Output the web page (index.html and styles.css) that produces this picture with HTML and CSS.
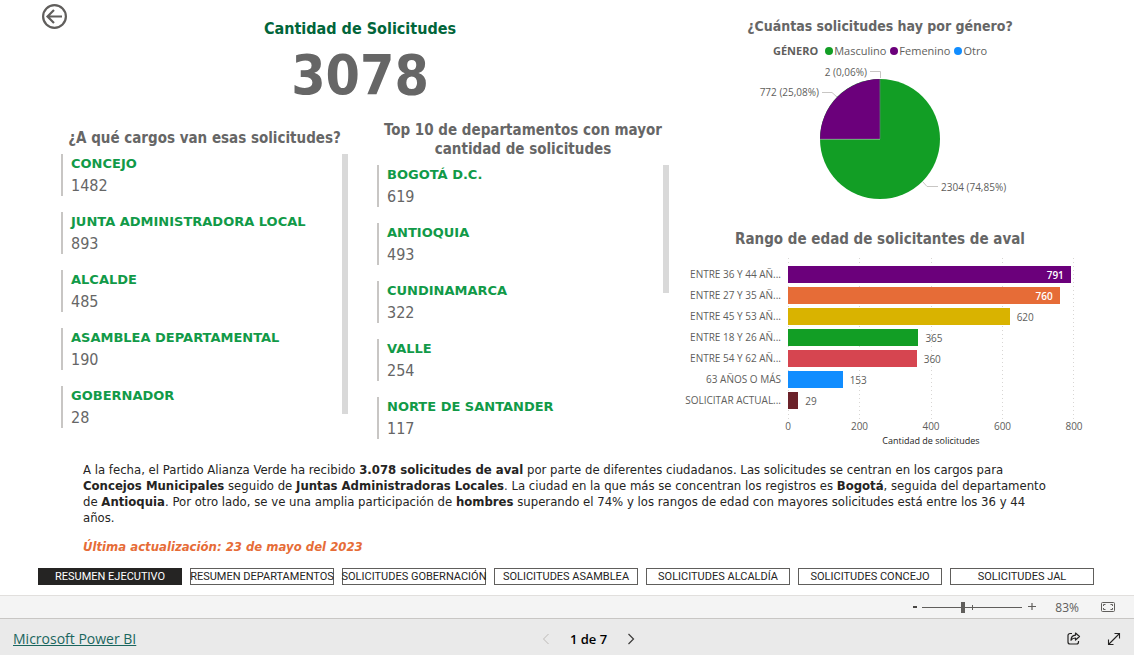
FILE: index.html
```html
<!DOCTYPE html>
<html lang="es">
<head>
<meta charset="utf-8">
<meta name="viewport" content="width=device-width, initial-scale=1">
<title>Microsoft Power BI</title>
<link rel="stylesheet" href="styles.css">
</head>
<body>
<main class="report">
  <div class="dashboard">
    <div class="left-pane">
      <header class="kpi-row">
        <button class="back" type="button" aria-label="Atrás">
          <svg width="26" height="26" viewBox="0 0 26 26" fill="none" stroke="#605e5c" stroke-width="2.200">
            <circle cx="12.500" cy="12.500" r="11.400"/>
            <path d="M20 12.500H6M12 6L5.500 12.500L12 19"/>
          </svg>
        </button>
        <div class="kpi">
          <h1 class="kpi-title">Cantidad de Solicitudes</h1>
          <p class="kpi-value">3078</p>
        </div>
      </header>
      <div class="lists">
        <section class="card card-short">
          <h2 class="title">¿A qué cargos van esas solicitudes?</h2>
          <div class="scroller">
            <ul class="items">
              <li class="item"><strong class="name">CONCEJO</strong><span class="value">1482</span></li>
              <li class="item"><strong class="name">JUNTA ADMINISTRADORA LOCAL</strong><span class="value">893</span></li>
              <li class="item"><strong class="name">ALCALDE</strong><span class="value">485</span></li>
              <li class="item"><strong class="name">ASAMBLEA DEPARTAMENTAL</strong><span class="value">190</span></li>
              <li class="item"><strong class="name">GOBERNADOR</strong><span class="value">28</span></li>
            </ul>
            <span class="thumb thumb-long"></span>
          </div>
        </section>
        <section class="card">
          <h2 class="title">Top 10 de departamentos con mayor cantidad de solicitudes</h2>
          <div class="scroller">
            <ul class="items">
              <li class="item"><strong class="name">BOGOTÁ D.C.</strong><span class="value">619</span></li>
              <li class="item"><strong class="name">ANTIOQUIA</strong><span class="value">493</span></li>
              <li class="item"><strong class="name">CUNDINAMARCA</strong><span class="value">322</span></li>
              <li class="item"><strong class="name">VALLE</strong><span class="value">254</span></li>
              <li class="item"><strong class="name">NORTE DE SANTANDER</strong><span class="value">117</span></li>
            </ul>
            <span class="thumb thumb-short"></span>
          </div>
        </section>
      </div>
    </div>

    <div class="right-pane">
      <section class="gender">
        <h2 class="title title-small">¿Cuántas solicitudes hay por género?</h2>
        <div class="legend">
          <strong class="legend-title">GÉNERO</strong>
          <span class="key"><i class="dot green"></i>Masculino</span>
          <span class="key"><i class="dot purple"></i>Femenino</span>
          <span class="key"><i class="dot blue"></i>Otro</span>
        </div>
        <svg class="pie" width="260" height="140" viewBox="0 0 260 140">
          <circle cx="130" cy="73" r="60" fill="#129e25"/>
          <path d="M130 73L70 73.2A60 60 0 0 1 129.8 13Z" fill="#6b007b"/>
          <path d="M130 73V13" stroke="#6a7f86" stroke-width="1" stroke-opacity=".6"/>
          <path d="M70 73.3H130" stroke="#ffffff" stroke-width="1" stroke-opacity=".4"/>
          <g fill="none" stroke="#c8c6c4">
            <path d="M120 5.500H130.500V12"/>
            <path d="M72 26.500H82L87 31"/>
            <path d="M173 116L177 120.500H188"/>
          </g>
          <text x="117" y="10" text-anchor="end">2 (0,06%)</text>
          <text x="69" y="30" text-anchor="end">772 (25,08%)</text>
          <text x="191" y="125">2304 (74,85%)</text>
        </svg>
      </section>

      <section class="ages">
        <h2 class="title">Rango de edad de solicitantes de aval</h2>
        <div class="chart">
          <ul class="labels">
            <li>ENTRE 36 Y 44 AÑ...</li><li>ENTRE 27 Y 35 AÑ...</li><li>ENTRE 45 Y 53 AÑ...</li><li>ENTRE 18 Y 26 AÑ...</li><li>ENTRE 54 Y 62 AÑ...</li><li>63 AÑOS O MÁS</li><li>SOLICITAR ACTUAL...</li>
          </ul>
          <div class="plot">
            <div class="bar-row"><span class="bar purple inside" style="width:98.9%">791</span></div>
            <div class="bar-row"><span class="bar orange inside" style="width:95%">760</span></div>
            <div class="bar-row"><span class="bar yellow" style="width:77.5%"></span><span>620</span></div>
            <div class="bar-row"><span class="bar green" style="width:45.6%"></span><span>365</span></div>
            <div class="bar-row"><span class="bar red" style="width:45%"></span><span>360</span></div>
            <div class="bar-row"><span class="bar blue" style="width:19.1%"></span><span>153</span></div>
            <div class="bar-row"><span class="bar brown" style="width:3.6%"></span><span>29</span></div>
          </div>
          <div class="ticks"><span>0</span><span>200</span><span>400</span><span>600</span><span>800</span></div>
          <p class="axis-title">Cantidad de solicitudes</p>
        </div>
      </section>
    </div>
  </div>

  <section class="summary">
    <p>A la fecha, el Partido Alianza Verde ha recibido <b>3.078 solicitudes de aval</b> por parte de diferentes ciudadanos. Las solicitudes se centran en los cargos para <b>Concejos Municipales</b> seguido de <b>Juntas Administradoras Locales</b>. La ciudad en la que más se concentran los registros es <b>Bogotá</b>, seguida del departamento de <b>Antioquia</b>. Por otro lado, se ve una amplia participación de <b>hombres</b> superando el 74% y los rangos de edad con mayores solicitudes está entre los 36 y 44 años.</p>
    <p class="updated">Última actualización: 23 de mayo del 2023</p>
  </section>

  <nav class="tabs">
    <button type="button" class="tab active">RESUMEN EJECUTIVO</button>
    <button type="button" class="tab">RESUMEN DEPARTAMENTOS</button>
    <button type="button" class="tab">SOLICITUDES GOBERNACIÓN</button>
    <button type="button" class="tab">SOLICITUDES ASAMBLEA</button>
    <button type="button" class="tab">SOLICITUDES ALCALDÍA</button>
    <button type="button" class="tab">SOLICITUDES CONCEJO</button>
    <button type="button" class="tab">SOLICITUDES JAL</button>
  </nav>
</main>

<div class="zoombar">
  <button type="button" class="zoom-step" aria-label="Alejar"><svg width="10" height="10" viewBox="0 0 10 10"><path d="M3 5H7" stroke="#484644" stroke-width="2"/></svg></button>
  <div class="slider">
    <input type="range" min="0" max="100" value="40" aria-label="Zoom">
  </div>
  <button type="button" class="zoom-step" aria-label="Acercar"><svg width="10" height="10" viewBox="0 0 10 10"><path d="M1 4.500H9M5 1V8" stroke="#605e5c" stroke-width="1.200"/></svg></button>
  <span class="percent">83%</span>
  <button type="button" class="icon" aria-label="Ajustar a la página">
    <svg width="14" height="10" viewBox="0 0 14 10" fill="none" stroke="#605e5c"><rect x=".5" y=".5" width="13" height="9" rx="1"/><path d="M2.500 4V2.500H4.500M9.500 2.500H11.500V4M11.500 6V7.500H9.500M4.500 7.500H2.500V6"/></svg>
  </button>
</div>

<footer class="footer">
  <a class="brand" href="#">Microsoft Power BI</a>
  <div class="pager">
    <button type="button" class="icon" aria-label="Página anterior" disabled><svg width="8" height="12" viewBox="0 0 8 12" fill="none" stroke="#bebbb8"><path d="M6.500 1L1.500 6L6.500 11"/></svg></button>
    <span class="page">1 de 7</span>
    <button type="button" class="icon" aria-label="Página siguiente"><svg width="8" height="12" viewBox="0 0 8 12" fill="none" stroke="#3b3a39" stroke-width="1.200"><path d="M1.500 1L6.500 6L1.500 11"/></svg></button>
  </div>
  <div class="actions">
    <button type="button" class="icon" aria-label="Compartir"><svg width="14" height="14" viewBox="0 0 14 14" fill="none" stroke="#252423" stroke-width="1.200" stroke-linejoin="round"><path d="M5 1.500H3A2 2 0 0 0 1 3.500V10A2 2 0 0 0 3 12H9.500A2 2 0 0 0 11.500 10V9"/><path d="M8.500 1L12.500 4.500L8.500 8V6C6.500 5.900 5 6.700 4 8.300C4.100 5.500 5.800 3.400 8.500 3.200Z"/></svg></button>
    <button type="button" class="icon" aria-label="Pantalla completa"><svg width="14" height="14" viewBox="0 0 14 14" fill="none" stroke="#252423" stroke-width="1.100"><path d="M1.500 12.500L12.500 1.500M7.500 1.500H12.500V6.500M1.500 7.500V12.500H6.500"/></svg></button>
  </div>
</footer>
</body>
</html>
```

FILE: styles.css
```css
* { box-sizing: border-box; }
body {
  margin: 0;
  min-height: 100vh;
  display: flex;
  flex-direction: column;
  background: #fff;
  color: #605e5c;
  font-family: "Open Sans", "Noto Sans", sans-serif;
  font-size: 10px;
}
h1, h2, p, ul { margin: 0; padding: 0; }
ul { list-style: none; }
button {
  border: 0;
  padding: 0;
  background: none;
  color: inherit;
  font: inherit;
  cursor: pointer;
}
svg { display: block; }
.green { background: #129e25; }
.purple { background: #6b007b; }
.blue { background: #118dff; }
.orange { background: #e66c37; }
.yellow { background: #d9b300; }
.red { background: #d64550; }
.brown { background: #6b222a; }

.report {
  flex: 1;
  display: flex;
  flex-direction: column;
  padding: 4px 40px 10px 38px;
}
.dashboard {
  display: grid;
  grid-template-columns: 638fr 408fr;
  padding: 0 10px 0 0;
}
.left-pane { padding-left: 4px; }
.kpi-row {
  display: grid;
  grid-template-columns: 26px 1fr 24px;
  align-items: start;
}
.kpi {
  padding-top: 14px;
  text-align: center;
  font-family: "DejaVu Sans Condensed", "DejaVu Sans", sans-serif;
}
.kpi-title {
  color: #01653a;
  font-size: 16px;
  line-height: 21px;
}
.kpi-value {
  color: #666;
  font-size: 55px;
  font-weight: 700;
  line-height: 73px;
}
.lists {
  display: grid;
  grid-template-columns: 287fr 292fr;
  gap: 29px;
  align-items: start;
  padding: 9px 7px 0 19px;
}
.title {
  color: #666;
  font-family: "DejaVu Sans Condensed", "DejaVu Sans", sans-serif;
  font-size: 15px;
  line-height: 19px;
  text-align: center;
}
.title-small { font-size: 14px; }
.card .title { padding-bottom: 6px; }
.card-short { padding-top: 8px; }
.scroller {
  display: flex;
  justify-content: space-between;
  align-items: flex-start;
}
.items { display: grid; gap: 16px; }
.item {
  display: grid;
  border-left: 2px solid #c8c6c4;
  padding-left: 8px;
  font-family: "DejaVu Sans Condensed", "DejaVu Sans", sans-serif;
}
.name {
  color: #119a48;
  font-family: "DejaVu Sans", sans-serif;
  font-size: 13px;
  line-height: 20px;
}
.value {
  padding-top: 2px;
  color: #666;
  font-size: 16px;
  line-height: 20px;
}
.thumb { width: 6px; background: #d9d9d9; }
.thumb-long { height: 260px; }
.thumb-short { height: 128px; }

.gender {
  display: flex;
  flex-direction: column;
  align-items: center;
  padding-top: 13px;
}
.legend {
  display: flex;
  gap: 4px;
  padding-top: 7px;
  font-size: 11px;
  line-height: 16px;
}
.legend-title { padding-right: 3px; }
.key { display: flex; align-items: center; gap: 1px; }
.dot { width: 8px; height: 8px; border-radius: 50%; }
.pie { margin-top: 7px; }
.pie text { fill: #605e5c; font-size: 10px; }
.ages { padding-top: 24px; }
.chart {
  display: grid;
  grid-template-columns: 105px 1fr;
  column-gap: 7px;
  padding: 9px 10px 0 0;
}
.labels {
  display: grid;
  grid-auto-rows: 17px;
  gap: 4px;
  padding-top: 8px;
  line-height: 17px;
  text-align: right;
  white-space: nowrap;
}
.plot {
  display: grid;
  grid-auto-rows: 17px;
  gap: 4px;
  padding: 8px 0 10px;
  --dots: repeating-linear-gradient(#d8d6d4 0 1px, transparent 1px 4px);
  background:
    var(--dots) 0 0 / 1px 100% no-repeat,
    var(--dots) 25% 0 / 1px 100% no-repeat,
    var(--dots) 50% 0 / 1px 100% no-repeat,
    var(--dots) 75% 0 / 1px 100% no-repeat,
    var(--dots) 100% 0 / 1px 100% no-repeat;
}
.bar-row {
  display: flex;
  align-items: center;
  gap: 7px;
}
.bar { height: 17px; line-height: 18px; }
.inside {
  padding-right: 7px;
  color: #fff;
  font-weight: 600;
  text-align: right;
}
.ticks {
  grid-column: 2;
  display: flex;
  justify-content: space-between;
  line-height: 14px;
}
.ticks span {
  display: flex;
  justify-content: center;
  width: 0;
}
.axis-title {
  grid-column: 2;
  color: #252423;
  font-size: 9px;
  line-height: 16px;
  text-align: center;
}

.summary {
  padding: 13px 42px 0 45px;
  color: #252423;
  font-family: "DejaVu Sans Condensed", "DejaVu Sans", sans-serif;
  font-size: 13px;
  line-height: 16px;
}
.updated {
  padding-top: 13px;
  color: #e66c37;
  font-style: italic;
  font-weight: 700;
}
.tabs {
  display: grid;
  grid-template-columns: repeat(7, 1fr);
  gap: 8px;
  margin-top: auto;
}
.tab {
  display: flex;
  justify-content: center;
  align-items: center;
  min-width: 0;
  height: 17px;
  border: 1px solid #605e5c;
  color: #252423;
  font-family: Roboto, "Open Sans", sans-serif;
  font-size: 11px;
  line-height: 15px;
  white-space: nowrap;
}
.active { border-color: #252423; background: #252423; color: #fff; }

.zoombar {
  display: flex;
  align-items: center;
  justify-content: flex-end;
  height: 24px;
  border-top: 1px solid #e1dfdd;
  border-bottom: 1px solid #c8c6c4;
  padding-right: 19px;
  background: #f4f4f4;
}
.slider {
  display: flex;
  width: 100px;
  margin: 0 5px 0 2px;
  background: linear-gradient(#605e5c, #605e5c) 50px 50% / 1px 5px no-repeat;
}
.slider input {
  appearance: none;
  width: 100%;
  height: 12px;
  margin: 0;
  background: linear-gradient(#605e5c, #605e5c) 0 6px / 100% 1px no-repeat;
}
.slider input::-webkit-slider-thumb {
  appearance: none;
  width: 4px;
  height: 11px;
  background: #605e5c;
}
.percent { padding: 0 22px 0 18px; font-size: 12px; }
.footer {
  display: grid;
  grid-template-columns: 1fr auto 1fr;
  align-items: center;
  height: 36px;
  padding: 3px 13px 0;
  background: #eaeaea;
}
.brand { color: #1a665e; font-size: 14px; line-height: 20px; }
.pager { display: flex; align-items: center; gap: 20px; padding-left: 43px; }
.page { color: #000; font-size: 13px; font-weight: 600; }
.actions { display: flex; justify-content: flex-end; gap: 26px; }
```
